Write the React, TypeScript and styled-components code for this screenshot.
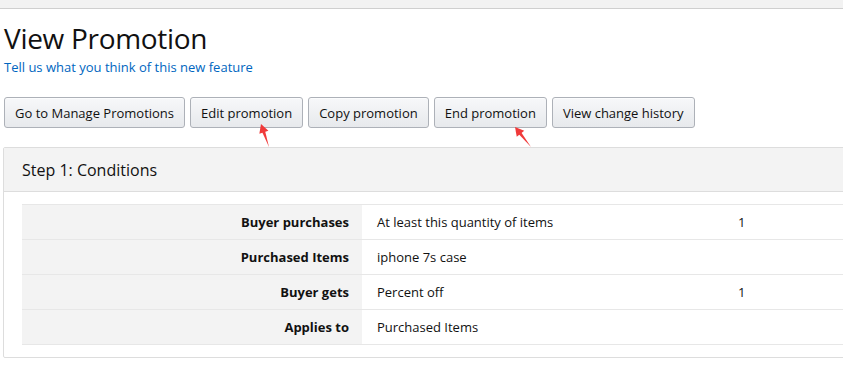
import React from 'react';
import styled, { createGlobalStyle } from 'styled-components';

const GlobalStyle = createGlobalStyle`
  html, body {
    margin: 0;
    padding: 0;
    background: #fff;
    overflow: hidden;
  }
  body {
    font-family: "Open Sans", "Noto Sans", sans-serif;
    color: #111;
  }
`;

const TopBar = styled.div`
  height: 8px;
  background: #f2f2f2;
  border-bottom: 1px solid #cfcfcf;
`;

const Page = styled.div`
  position: relative;
  padding: 13px 0 0 4px;
  width: 900px;
`;

const Title = styled.h1`
  margin: 0;
  font-size: 28px;
  font-weight: 400;
  line-height: 33px;
  letter-spacing: -0.3px;
`;

const FeedbackLink = styled.a`
  display: inline-block;
  font-size: 13px;
  line-height: 17px;
  color: #0066c0;
  text-decoration: none;
`;

const Toolbar = styled.div`
  display: flex;
  gap: 5px;
  margin-top: 20px;
`;

const Button = styled.button`
  height: 31px;
  padding: 0 10px;
  font-family: inherit;
  font-size: 13px;
  color: #111;
  background: linear-gradient(#f7f8fa, #e7e9ec);
  border: 1px solid #adb1b8;
  border-radius: 3px;
  box-shadow: 0 1px 0 rgba(255, 255, 255, 0.6) inset;
  cursor: pointer;
`;

const Panel = styled.section`
  margin: 19px 0 0 -1px;
  border: 1px solid #ddd;
  border-radius: 2px;
  padding-bottom: 12px;
`;

const PanelHeader = styled.div`
  height: 43px;
  display: flex;
  align-items: center;
  padding-left: 18px;
  background: #f3f3f3;
  border-bottom: 1px solid #ddd;
  font-size: 16px;
`;

const Table = styled.table`
  margin: 12px 0 0 18px;
  border-collapse: collapse;
  font-size: 13px;
  width: 860px;
`;

const Row = styled.tr`
  border-top: 1px solid #e7e7e7;
  border-bottom: 1px solid #e7e7e7;
`;

const Label = styled.th`
  width: 340px;
  box-sizing: border-box;
  height: 35px;
  padding: 0 13px 0 0;
  text-align: right;
  font-weight: 700;
  background: #f3f3f3;
`;

const Cell = styled.td<{ $wide?: boolean }>`
  width: ${(p) => (p.$wide ? '361px' : 'auto')};
  box-sizing: border-box;
  padding: 0 15px;
  background: #fff;
`;

const Arrow = styled.svg`
  position: absolute;
  overflow: visible;
  pointer-events: none;
`;

const rows = [
  ['Buyer purchases', 'At least this quantity of items', '1'],
  ['Purchased Items', 'iphone 7s case', ''],
  ['Buyer gets', 'Percent off', '1'],
  ['Applies to', 'Purchased Items', ''],
];

const RedArrow: React.FC<{ x1: number; y1: number; x2: number; y2: number }> = ({ x1, y1, x2, y2 }) => {
  const ang = Math.atan2(y1 - y2, x1 - x2);
  const len = 10;
  const spread = 0.5;
  const ax = x1 - len * Math.cos(ang - spread);
  const ay = y1 - len * Math.sin(ang - spread);
  const bx = x1 - len * Math.cos(ang + spread);
  const by = y1 - len * Math.sin(ang + spread);
  const mx = x1 - len * 0.7 * Math.cos(ang);
  const my = y1 - len * 0.7 * Math.sin(ang);
  // perpendicular offset for a tapered shaft
  const px = Math.sin(ang) * 1.6;
  const py = -Math.cos(ang) * 1.6;
  return (
    <Arrow style={{ left: 0, top: -9 }} width="1" height="1">
      <path d={`M${mx + px} ${my + py} L${x2} ${y2} L${mx - px} ${my - py} Z`} fill="#f03a3a" />
      <path d={`M${x1} ${y1} L${ax} ${ay} L${bx} ${by} Z`} fill="#f03a3a" />
    </Arrow>
  );
};

export default function App() {
  return (
    <>
      <GlobalStyle />
      <TopBar />
      <Page>
        <Title>View Promotion</Title>
        <FeedbackLink href="#">Tell us what you think of this new feature</FeedbackLink>
        <Toolbar>
          <Button>Go to Manage Promotions</Button>
          <Button>Edit promotion</Button>
          <Button>Copy promotion</Button>
          <Button>End promotion</Button>
          <Button>View change history</Button>
        </Toolbar>
        <Panel>
          <PanelHeader>Step 1: Conditions</PanelHeader>
          <Table>
            <tbody>
              {rows.map(([label, value, qty]) => (
                <Row key={label}>
                  <Label>{label}</Label>
                  <Cell $wide>{value}</Cell>
                  <Cell>{qty}</Cell>
                </Row>
              ))}
            </tbody>
          </Table>
        </Panel>
        <RedArrow x1={261} y1={124} x2={269} y2={147} />
        <RedArrow x1={515} y1={127} x2={531} y2={147} />
      </Page>
    </>
  );
}
